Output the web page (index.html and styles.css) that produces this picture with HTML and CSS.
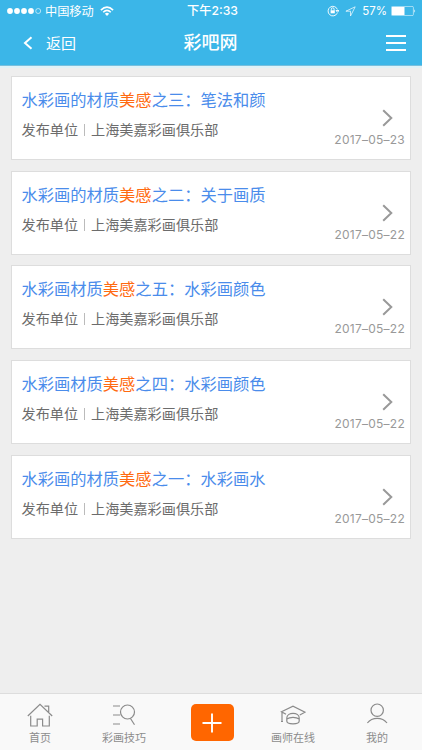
FILE: index.html
```
<!DOCTYPE html>
<html lang="zh-CN">
<head>
<meta charset="utf-8">
<title>彩吧网</title>
<link rel="stylesheet" href="styles.css">
</head>
<body>
<div class="app">
  <div class="status">
    <div class="carrier">
      <svg width="35" height="8" viewBox="0 0 35 8"><g fill="#fff"><circle cx="3" cy="4" r="2.9"/><circle cx="10" cy="4" r="2.9"/><circle cx="17" cy="4" r="2.9"/><circle cx="24" cy="4" r="2.9"/></g><circle cx="31.2" cy="4" r="2.5" fill="none" stroke="#fff" stroke-width=".6"/></svg>
      <span class="operator">中国移动</span>
      <svg width="14" height="10" viewBox="0 0 14 10"><g fill="none" stroke="#fff" stroke-width="1.6"><path d="M.9 4.1Q7-1.9 13.1 4.1"/><path d="M3.2 6.3Q7 2.6 10.8 6.3"/></g><path d="M4.9 7.7Q7 5.9 9.1 7.7L7 9.9Z" fill="#fff"/></svg>
    </div>
    <div class="clock">下午2:33</div>
    <div class="power">
      <svg width="12" height="12" viewBox="0 0 12 12" fill="none" stroke="#fff" stroke-width=".9"><path d="M10.2 8.2A4.8 4.8 0 1 1 10.4 4.5M9 5.5H12L10.5 7.3Z"/><path d="M4.3 5.5V4.2a1.4 1.4 0 0 1 2.8 0V5.5"/><path d="M3.6 5.3H7.8V8.3H3.6Z" fill="#fff" stroke="none"/></svg>
      <svg class="locate" width="11" height="11" viewBox="0 0 11 11" fill="none" stroke="#fff" stroke-width=".7" stroke-linejoin="round"><path d="M10.2.8L.9 5.2H5.5V10Z"/></svg>
      <span class="percent">57%</span>
      <svg width="25" height="10" viewBox="0 0 25 10"><rect x=".4" y=".4" width="22" height="9.2" rx="1.2" fill="none" stroke="#fff" stroke-width=".7" opacity=".8"/><path d="M1 1H13.5V9H1Z" fill="#fff"/><path d="M23.4 3.2Q25 5 23.4 6.8Z" fill="#fff"/></svg>
    </div>
  </div>
  <header class="header">
    <a class="back"><svg width="10" height="14" viewBox="0 0 10 14" fill="none" stroke="#fff" stroke-width="2"><path d="M8.5 1.2L2 7L8.5 12.8"/></svg><span>返回</span></a>
    <h1 class="title">彩吧网</h1>
    <div class="menu"><i></i><i></i><i></i></div>
  </header>
  <main class="list">
    <article class="card"><div><h2 class="name">水彩画的材质<em>美感</em>之三：笔法和颜</h2><p class="source">发布单位<b></b>上海美嘉彩画俱乐部</p></div><div class="meta"><svg class="arrow" width="11" height="18" viewBox="0 0 11 18"><path d="M1.2 1.2L9.3 9L1.2 16.8"/></svg><time>2017–05–23</time></div></article>
    <article class="card"><div><h2 class="name">水彩画的材质<em>美感</em>之二：关于画质</h2><p class="source">发布单位<b></b>上海美嘉彩画俱乐部</p></div><div class="meta"><svg class="arrow" width="11" height="18" viewBox="0 0 11 18"><path d="M1.2 1.2L9.3 9L1.2 16.8"/></svg><time>2017–05–22</time></div></article>
    <article class="card"><div><h2 class="name">水彩画材质<em>美感</em>之五：水彩画颜色</h2><p class="source">发布单位<b></b>上海美嘉彩画俱乐部</p></div><div class="meta"><svg class="arrow" width="11" height="18" viewBox="0 0 11 18"><path d="M1.2 1.2L9.3 9L1.2 16.8"/></svg><time>2017–05–22</time></div></article>
    <article class="card"><div><h2 class="name">水彩画材质<em>美感</em>之四：水彩画颜色</h2><p class="source">发布单位<b></b>上海美嘉彩画俱乐部</p></div><div class="meta"><svg class="arrow" width="11" height="18" viewBox="0 0 11 18"><path d="M1.2 1.2L9.3 9L1.2 16.8"/></svg><time>2017–05–22</time></div></article>
    <article class="card"><div><h2 class="name">水彩画的材质<em>美感</em>之一：水彩画水</h2><p class="source">发布单位<b></b>上海美嘉彩画俱乐部</p></div><div class="meta"><svg class="arrow" width="11" height="18" viewBox="0 0 11 18"><path d="M1.2 1.2L9.3 9L1.2 16.8"/></svg><time>2017–05–22</time></div></article>
  </main>
  <nav class="tabs">
    <a class="tab"><svg width="26" height="24" viewBox="0 0 26 24"><path d="M.8 13L13 1.3L25.2 13M3.7 12.8V23H10.2V16.2H15.6V23H22.3V12.8M17.5 3.2H21.7V9"/></svg><span>首页</span></a>
    <a class="tab"><svg width="24" height="24" viewBox="0 0 24 24"><path d="M1 3H8M1 12H8M1 21H8M18.5 15.5L22.5 21.8"/><circle cx="15.5" cy="9" r="7"/></svg><span>彩画技巧</span></a>
    <a class="add"><svg width="20" height="20" viewBox="0 0 20 20"><path d="M10 .5V19.5M.5 10H19.5"/></svg></a>
    <a class="tab"><svg width="26" height="24" viewBox="0 0 26 24"><path d="M6 11.2L1.5 8.8L13 3.2L25 9.2L19.8 12M2 9V18M1 18.5H3M6.8 15C7 8.8 19.2 8.8 19.2 15V18C19.2 21.8 6.8 21.8 6.8 18ZM6.8 16C10 13.8 16 13.8 19.2 16"/></svg><span>画师在线</span></a>
    <a class="tab"><svg width="24" height="24" viewBox="0 0 24 24"><circle cx="12.2" cy="7.2" r="6.2"/><path d="M2.4 20C7.2 13.8 17.2 13.8 22 20"/></svg><span>我的</span></a>
  </nav>
</div>
</body>
</html>
```
FILE: styles.css
```
* { box-sizing: border-box; }
body {
  margin: 0;
  font-family: "Noto Sans CJK SC", sans-serif;
  background: #eee;
}
svg { display: block; flex: none; }
.app {
  width: 422px;
  height: 750px;
  display: flex;
  flex-direction: column;
  overflow: hidden;
}
.status {
  height: 21px;
  display: grid;
  grid-template-columns: 1fr auto 1fr;
  align-items: center;
  padding: 1px 6px 0 7px;
  background: #3bb6e8;
  color: #fff;
  font-size: 12px;
  line-height: 20px;
}
.carrier, .power { display: flex; align-items: center; }
.operator { margin: 0 6px 0 3px; font-size: 12.2px; }
.clock { padding-left: 2px; font-family: Inter, "Noto Sans CJK SC", sans-serif; font-size: 12.2px; font-weight: 500; }
.power { justify-content: flex-end; }
.power > svg:first-child { margin-top: -1px; }
.locate { margin-left: 6px; }
.percent { margin: 0 4px 0 6px; font-family: Inter, sans-serif; font-size: 11.5px; }
.header {
  height: 45px;
  display: grid;
  grid-template-columns: 1fr auto 1fr;
  align-items: center;
  padding: 0 16px 0 23px;
  border-bottom: 1px solid #78bfdd;
  background: #3bb6e8;
  color: #fff;
}
.back { display: flex; align-items: center; gap: 13px; font-size: 15px; line-height: 22px; }
.title { margin: -4px 8px 0 0; font-size: 18px; font-weight: 500; line-height: 26px; }
.menu { justify-self: end; display: grid; gap: 5px; width: 20px; }
.menu i { height: 2px; background: #fff; }
.list {
  flex: 1;
  display: flex;
  flex-direction: column;
  gap: 10.7px;
  padding: 10px 11px 0 10.5px;
  box-shadow: inset 0 2px #dff2f8;
}
.card {
  height: 84px;
  flex: none;
  display: flex;
  justify-content: space-between;
  padding: 0 5px 0 10px;
  border: 1px solid #ddd;
  background: #fff;
}
.name { margin: 10px 0 0; color: #4a8ceb; font-size: 16.27px; font-weight: 400; line-height: 24px; }
.name em { color: #ff6a10; font-style: normal; }
.source { margin: 8px 0 0; color: #6c6c6c; font-size: 14.15px; line-height: 20px; }
.source b { display: inline-block; width: 1px; height: 12px; margin: 0 6px; background: #bbb; vertical-align: -1px; }
.meta { display: flex; flex-direction: column; align-items: flex-end; color: #999; }
.arrow { margin: 32px 12px 0 0; }
.arrow path { fill: none; stroke: #999; stroke-width: 2; }
.meta time { margin-top: 4px; font-family: Inter, sans-serif; font-size: 12px; letter-spacing: .25px; line-height: 18px; }
.tabs {
  height: 57px;
  display: grid;
  grid-template-columns: 80px 88px 88px 74px 92px;
  border-top: 1px solid #ddd;
  background: #f9f9f9;
  color: #8c8c8c;
}
.tab { display: flex; flex-direction: column; align-items: center; padding-top: 9px; font-size: 11px; line-height: 16px; white-space: nowrap; }
.tab:last-child { padding-left: 2px; }
.tab span { margin-top: 2px; }
.tab svg { fill: none; stroke: #8b8b8b; stroke-width: 1.2; }
.add {
  display: flex;
  align-items: center;
  justify-content: center;
  width: 43px;
  height: 37px;
  margin-top: 10px;
  justify-self: center;
  border-radius: 5px;
  background: #ff6600;
}
.add path { fill: none; stroke: #fff; stroke-width: 1.9; }
```
